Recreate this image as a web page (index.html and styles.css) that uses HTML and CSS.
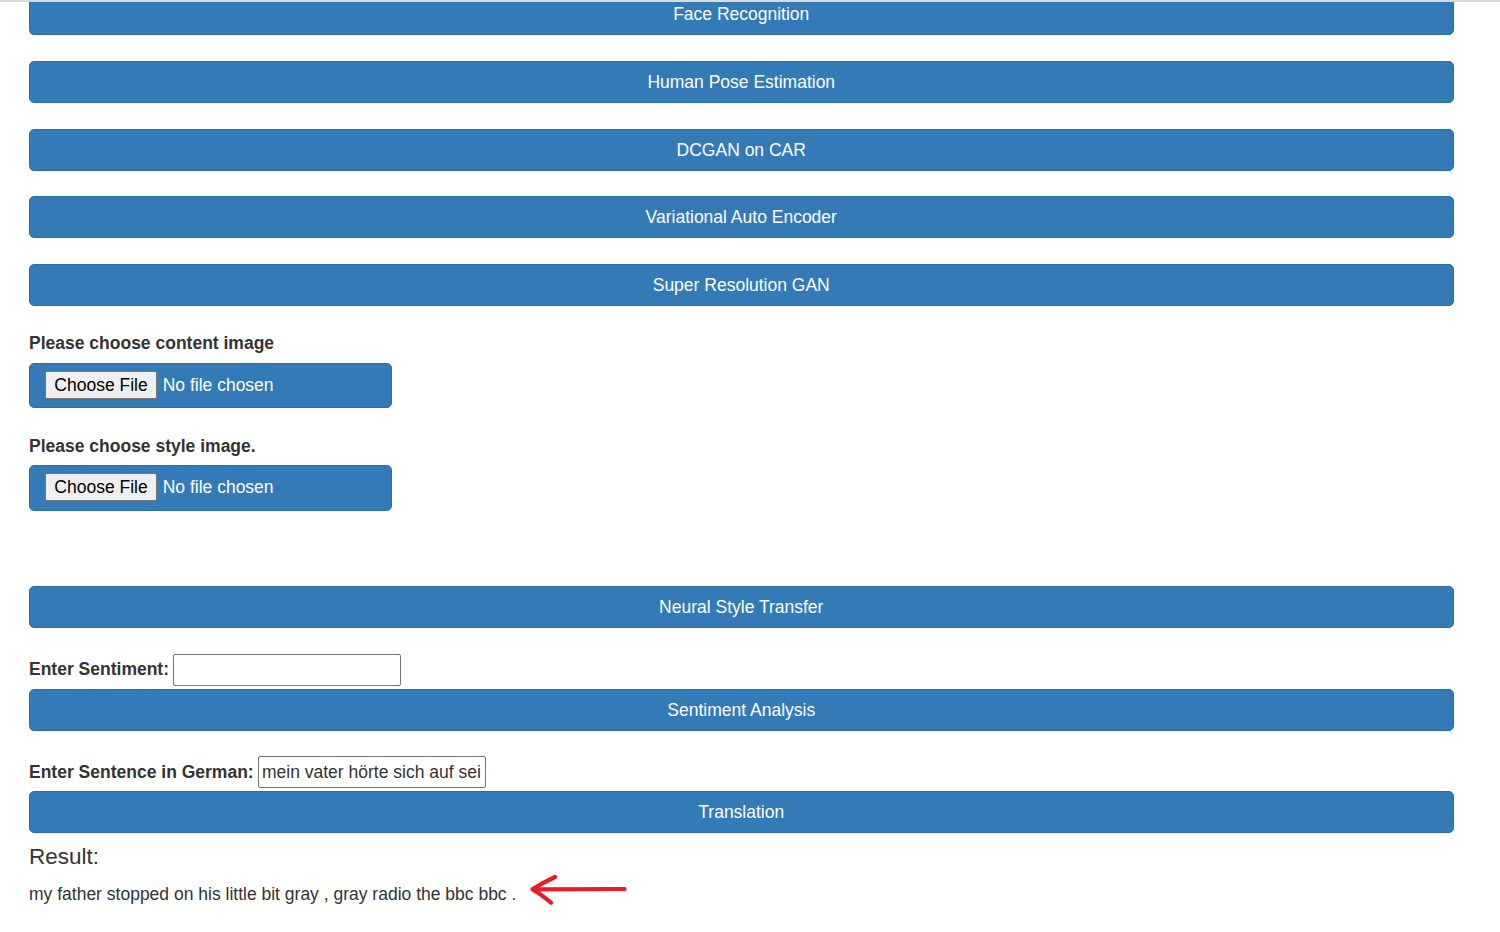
FILE: index.html
```html
<!DOCTYPE html>
<html lang="en">
<head>
<meta charset="utf-8">
<title>Deep Learning Demos</title>
<link rel="stylesheet" href="styles.css">
</head>
<body>
<div class="topline"></div>
<main class="page">
  <div class="nav-btns">
    <button class="btn">Face Recognition</button>
    <button class="btn">Human Pose Estimation</button>
    <button class="btn">DCGAN on CAR</button>
    <button class="btn">Variational Auto Encoder</button>
    <button class="btn">Super Resolution GAN</button>
  </div>

  <form class="style-form">
    <div class="file-group">
      <div class="group-label">Please choose content image</div>
      <label class="file-field"><span class="file-btn">Choose File</span><span class="file-name">No file chosen</span></label>
    </div>
    <div class="file-group">
      <div class="group-label">Please choose style image.</div>
      <label class="file-field"><span class="file-btn">Choose File</span><span class="file-name">No file chosen</span></label>
    </div>
    <button type="button" class="btn btn-neural">Neural Style Transfer</button>
  </form>

  <form class="text-form">
    <div class="input-row">
      <label class="row-label" for="sent">Enter Sentiment:</label>
      <input id="sent" class="text-input" type="text">
    </div>
    <button type="button" class="btn btn-attached">Sentiment Analysis</button>
  </form>

  <form class="text-form">
    <div class="input-row">
      <label class="row-label" for="de">Enter Sentence in German:</label>
      <input id="de" class="text-input" type="text" value="mein vater hörte sich auf seinem kleinen , grauen radio die bbc an .">
    </div>
    <button type="button" class="btn btn-attached">Translation</button>
  </form>

  <section class="result">
    <h4 class="result-title">Result:</h4>
    <p class="result-text">my father stopped on his little bit gray , gray radio the bbc bbc .<svg class="arrow" width="100" height="32" viewBox="0 0 100 32" aria-hidden="true"><path d="M5 15.3 L96.5 15" fill="none" stroke="#ed1c24" stroke-width="4.2" stroke-linecap="round"/><path d="M27 3 Q14 9 4.5 15.3 Q14 21 23 28.6" fill="none" stroke="#ed1c24" stroke-width="4.2" stroke-linecap="round" stroke-linejoin="round"/></svg></p>
  </section>
</main>
</body>
</html>
```

FILE: styles.css
```css
html, body {
  margin: 0;
  padding: 0;
  background: #fff;
}

body {
  font-family: "Liberation Sans", Arial, Helvetica, sans-serif;
  font-size: 17.5px;
  line-height: 25px;
  color: #333;
  overflow: hidden;
}

.topline {
  position: fixed;
  top: 0;
  left: 0;
  right: 0;
  height: 2px;
  background: #dadadd;
  z-index: 5;
}

.page {
  margin-left: 29px;
  width: 1424.5px;
}

.btn {
  display: block;
  width: 100%;
  box-sizing: border-box;
  height: 42px;
  padding: 8px 15px 7px;
  border: 1px solid #2e6da4;
  border-radius: 5px;
  background: #337ab7;
  color: #fff;
  font-family: inherit;
  font-size: 17.5px;
  line-height: 25px;
  text-align: center;
  cursor: pointer;
}

.nav-btns {
  display: flex;
  flex-direction: column;
  gap: 25.75px;
  margin-top: -7px;
}

.style-form {
  display: flex;
  flex-direction: column;
  gap: 25.4px;
  margin: 25.3px 0 0;
}

.file-group {
  display: flex;
  flex-direction: column;
  gap: 6.5px;
}

.group-label {
  font-weight: bold;
}

.file-field {
  display: flex;
  align-items: flex-start;
  box-sizing: border-box;
  width: 362.7px;
  height: 45.5px;
  padding: 7px 15.3px;
  border: 1px solid #2e6da4;
  border-radius: 5px;
  background: #337ab7;
  color: #fff;
  cursor: pointer;
}

.file-btn {
  box-sizing: border-box;
  height: 28px;
  padding: 0 8px;
  border: 1px solid #767676;
  border-radius: 2px;
  background: #efefef;
  color: #000;
  line-height: 26px;
  white-space: nowrap;
}

.file-name {
  margin-left: 6px;
  line-height: 28px;
  white-space: nowrap;
}

.btn-neural {
  margin-top: 50.2px;
}

.text-form {
  margin-top: 25.6px;
}

.input-row {
  display: flex;
  align-items: center;
  gap: 4.3px;
  height: 32px;
}

.row-label {
  font-weight: bold;
  white-space: nowrap;
}

.text-input {
  box-sizing: border-box;
  width: 228px;
  height: 32px;
  padding: 1px 4px 1px 3px;
  border: 1px solid #767676;
  border-radius: 2px;
  font-family: inherit;
  font-size: 17.5px;
  color: #333;
  background: #fff;
}

.btn-attached {
  margin-top: 2.8px;
}

.result-title {
  margin: 11.9px 0 12.3px;
  font-size: 22.5px;
  font-weight: normal;
  line-height: 24.75px;
  color: #333;
}

.result-text {
  margin: 0;
  line-height: 25px;
}

.arrow {
  margin: -10px 0 -10px 11.3px;
  vertical-align: 4px;
}
```
